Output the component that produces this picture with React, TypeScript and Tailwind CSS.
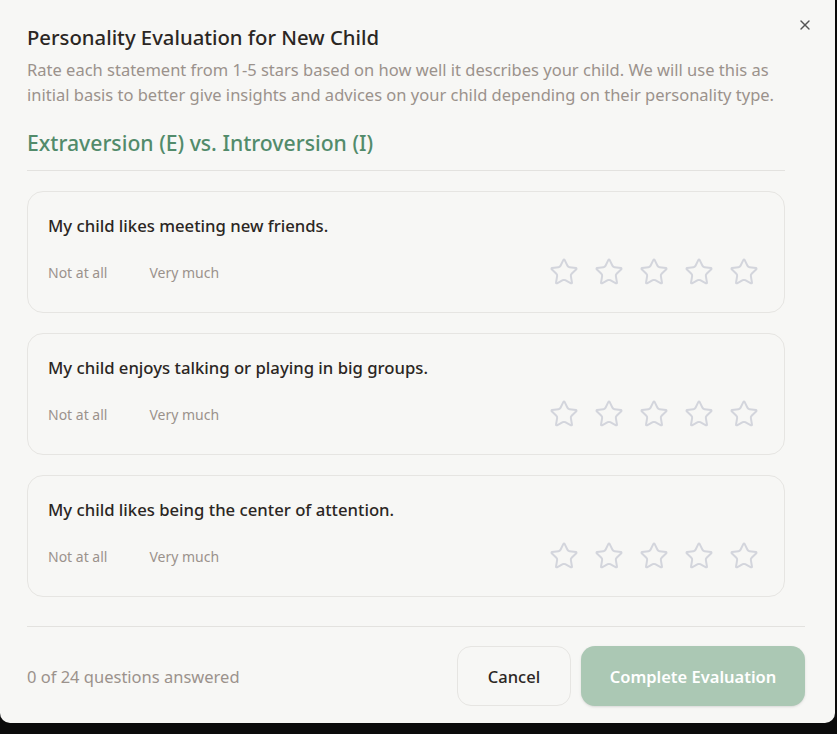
import {Star, X} from "lucide-react";

const questions = [
  "My child likes meeting new friends.",
  "My child enjoys talking or playing in big groups.",
  "My child likes being the center of attention.",
];

const QuestionCard = ({text}: {text: string}) => {
  return (
    <div className="rounded-[16px] border border-[#e6e5e2] pt-[22px] pb-[25px] pl-[20px] pr-[25px]">
      <p className="text-[16.7px] leading-[24px] font-medium text-[#2b2623]">{text}</p>
      <div className="mt-[19px] flex items-center justify-between">
        <div className="flex items-center gap-[42px] text-[14px] text-[#9b928c]">
          <span>Not at all</span>
          <span>Very much</span>
        </div>
        <div className="flex items-center gap-[15px]">
          {[1, 2, 3, 4, 5].map((n) => (
            <Star key={n} size={30} strokeWidth={1.6} className="text-[#d3d5dc]" />
          ))}
        </div>
      </div>
    </div>
  );
};

export default function App() {
  return (
    <div className="min-h-screen w-full bg-[#0b0b0b]" style={{fontFamily: '"Noto Sans", "Open Sans", sans-serif'}}>
      <div className="relative flex h-[723px] w-[835px] flex-col rounded-b-[10px] bg-[#f7f7f5] pl-[27px] pr-[30px] pb-[17px]">
        <button className="absolute right-[22px] top-[17px] text-[#555]">
          <X size={16} strokeWidth={2} />
        </button>

        <div className="pt-[23px] pr-[20px]">
          <h2 className="text-[20.3px] leading-[28px] font-medium text-[#2b2623]">Personality Evaluation for New Child</h2>
          <p className="mt-[6px] text-[16.5px] leading-[25px] text-[#9b928c]">
            Rate each statement from 1-5 stars based on how well it describes your child. We will use this as initial
            basis to better give insights and advices on your child depending on their personality type.
          </p>
        </div>

        <div className="flex-1 overflow-hidden pr-[20px]">
          <h3 className="mt-[21px] border-b border-[#e3e2df] pb-[12px] text-[21.2px] leading-[30px] font-medium text-[#528b6b]">
            Extraversion (E) vs. Introversion (I)
          </h3>
          <div className="mt-[20px] flex flex-col gap-[20px]">
            {questions.map((q) => (
              <QuestionCard key={q} text={q} />
            ))}
          </div>
        </div>

        <div className="flex items-center justify-between border-t border-[#e3e2df] pt-[19px]">
          <span className="pt-[3px] text-[16.5px] text-[#9b928c]">0 of 24 questions answered</span>
          <div className="flex items-center gap-[10px]">
            <button className="h-[60px] w-[114px] rounded-[14px] border border-[#e6e5e2] pt-[3px] text-[16.5px] font-medium text-[#2b2623]">
              Cancel
            </button>
            <button className="h-[60px] w-[224px] rounded-[14px] bg-[#abc8b4] pt-[3px] text-[16.5px] font-semibold text-white shadow-sm">
              Complete Evaluation
            </button>
          </div>
        </div>
      </div>
    </div>
  );
}
